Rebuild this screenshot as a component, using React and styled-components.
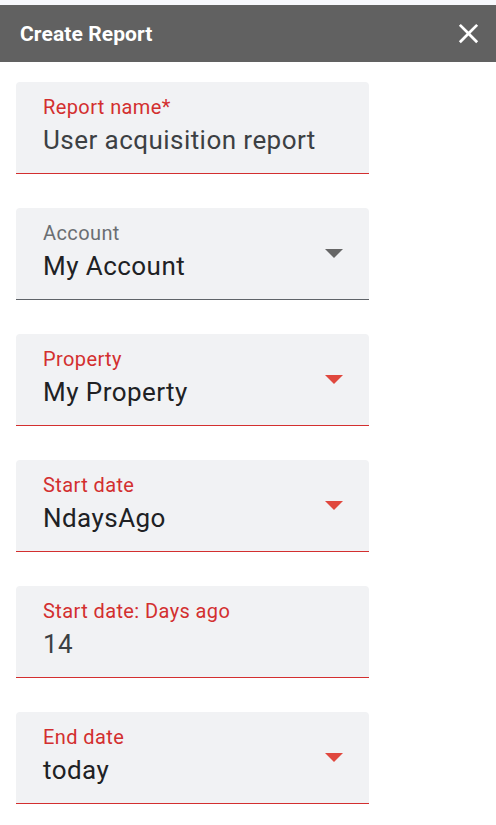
import React from "react";
import styled, { createGlobalStyle } from "styled-components";

const GlobalStyle = createGlobalStyle`
  html, body {
    margin: 0;
    padding: 0;
    background: #ffffff;
    font-family: Roboto, "Liberation Sans", Arial, sans-serif;
  }
`;

const Page = styled.div`
  border-top: 5px solid #f7f8fc;
  min-height: 820px;
  background: #ffffff;
`;

const Header = styled.div`
  height: 57px;
  background: #616161;
  display: flex;
  align-items: center;
  justify-content: space-between;
  padding: 0 11px 0 20px;
`;

const HeaderTitle = styled.h1`
  margin: 0;
  color: #ffffff;
  font-size: 21px;
  font-weight: 700;
  letter-spacing: 0.1px;
`;

const CloseButton = styled.button`
  border: none;
  background: transparent;
  padding: 0;
  width: 33px;
  height: 33px;
  display: flex;
  align-items: center;
  justify-content: center;
  cursor: pointer;
`;

const Form = styled.div`
  display: flex;
  flex-direction: column;
  gap: 34px;
  padding: 20px 0 0 16px;
`;

const Field = styled.div`
  width: 353px;
  height: 92px;
  box-sizing: border-box;
  background: #f1f2f4;
  border-radius: 4px 4px 0 0;
  border-bottom: 1px solid ${(p) => (p.$error ? "#d32f2f" : "#5f6368")};
  padding: 14px 26px 18px 27px;
  display: flex;
  align-items: center;
  justify-content: space-between;
`;

const FieldText = styled.div`
  display: flex;
  flex-direction: column;
  gap: 6px;
`;

const Label = styled.div`
  font-size: 20px;
  line-height: 23px;
  letter-spacing: 0.4px;
  color: ${(p) => (p.$error ? "#d32f2f" : "#6b6e72")};
`;

const Value = styled.div`
  font-size: 26px;
  line-height: 30px;
  letter-spacing: 0.45px;
  color: ${(p) => (p.$input ? "#3c4043" : "#202124")};
`;

const Arrow = styled.svg`
  flex-shrink: 0;
  margin-top: 3px;
`;

const fields = [
  { label: "Report name*", value: "User acquisition report", error: true, input: true },
  { label: "Account", value: "My Account", error: false },
  { label: "Property", value: "My Property", error: true },
  { label: "Start date", value: "NdaysAgo", error: true },
  { label: "Start date: Days ago", value: "14", error: true, input: true },
  { label: "End date", value: "today", error: true },
];

function App() {
  return (
    <>
      <GlobalStyle />
      <Page>
        <Header>
          <HeaderTitle>Create Report</HeaderTitle>
          <CloseButton aria-label="Close">
            <svg width="33" height="33" viewBox="0 0 24 24" fill="#ffffff">
              <path d="M19 6.41L17.59 5 12 10.59 6.41 5 5 6.41 10.59 12 5 17.59 6.41 19 12 13.41 17.59 19 19 17.59 13.41 12z" />
            </svg>
          </CloseButton>
        </Header>
        <Form>
          {fields.map((f) => (
            <Field key={f.label} $error={f.error}>
              <FieldText>
                <Label $error={f.error}>{f.label}</Label>
                <Value $input={f.input}>{f.value}</Value>
              </FieldText>
              {!f.input && (
                <Arrow width="18" height="9" viewBox="0 0 18 9">
                  <polygon points="0,0 18,0 9,9" fill={f.error ? "#e0483e" : "#666666"} />
                </Arrow>
              )}
            </Field>
          ))}
        </Form>
      </Page>
    </>
  );
}

export default App;
